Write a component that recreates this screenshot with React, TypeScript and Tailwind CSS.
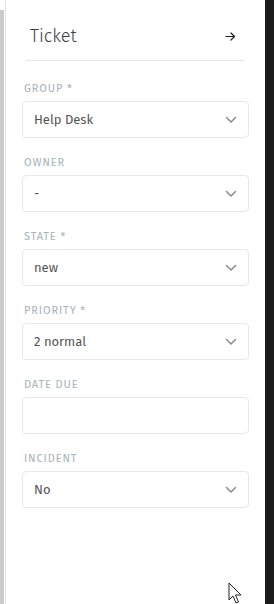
import React from "react";

const Chevron = () => (
  <svg width="12" height="8" viewBox="0 0 12 8" fill="none" className="text-[#8a8f94]">
    <path d="M1.5 1.5 L6 6 L10.5 1.5" stroke="currentColor" strokeWidth="1.6" strokeLinecap="round" strokeLinejoin="round" />
  </svg>
);

const Field = ({ label, value, select = true }: { label: string; value?: string; select?: boolean }) => (
  <div className="flex flex-col">
    <div className="h-[26px] flex items-center text-[11px] tracking-[0.08em] text-[#a9b3b8] uppercase leading-none pl-[2px]">
      {label}
    </div>
    <div className="h-[37px] border border-[#e8e8e8] rounded-[4px] bg-white flex items-center justify-between pl-[11px] pr-[11px]">
      <span className="text-[13px] text-[#555555]">{value}</span>
      {select && <Chevron />}
    </div>
  </div>
);

export default function App() {
  return (
    <div className="w-[274px] h-[604px] flex bg-white overflow-hidden relative" style={{ fontFamily: '"Fira Sans", "Noto Sans", sans-serif' }}>
      <div className="w-[4px] flex flex-col">
        <div className="h-[10px] bg-white" />
        <div className="flex-1 bg-[#cbcbcb]" />
      </div>
      <div className="w-[1px]" />
      <div className="w-[1px] bg-[#e4e4e4]" />
      <div className="w-[259px] flex flex-col bg-white">
        <div className="mx-[20px] h-[61px] border-b border-[#e6e6e6] flex items-center justify-between pl-[4px] pr-[9px] pt-[12px]">
          <span className="text-[18px] text-[#3c3c44] font-light">Ticket</span>
          <svg width="11" height="9" viewBox="0 0 11 9" fill="none">
            <path d="M1 4.5 H9.5 M6 1 L9.5 4.5 L6 8" stroke="#222" strokeWidth="1.2" strokeLinecap="round" strokeLinejoin="round" />
          </svg>
        </div>
        <div className="px-[16px] pt-[14px] flex flex-col gap-[11px]">
          <Field label="Group *" value="Help Desk" />
          <Field label="Owner" value="-" />
          <Field label="State *" value="new" />
          <Field label="Priority *" value="2 normal" />
          <Field label="Date Due" value="" select={false} />
          <Field label="Incident" value="No" />
        </div>
      </div>
      <div className="w-[9px] bg-[#1b1b1b]" />
      <svg className="absolute left-[228px] top-[582px]" width="16" height="24" viewBox="0 0 16 24">
        <path d="M1 1 L1 18 L5 14 L8 21 L10.5 20 L7.5 13 L13 13 Z" fill="white" stroke="#222" strokeWidth="1" strokeLinejoin="round" />
      </svg>
    </div>
  );
}
